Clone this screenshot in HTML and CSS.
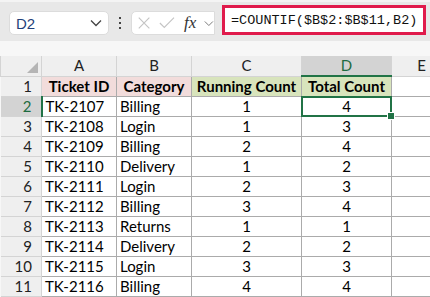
FILE: index.html
```html
<!DOCTYPE html>
<html lang="en">
<head>
    <meta charset="UTF-8">
    <title>COUNTIF Running Count</title>
    <link rel="stylesheet" href="styles.css">
</head>
<body>
    <div class="toolbar">
        <div class="name-box">
            <span>D2</span>
            <svg class="chev" width="12" height="8" viewBox="0 0 12 8"><path d="M1 1.5 L6 6.5 L11 1.5" fill="none" stroke="#444" stroke-width="1.3"/></svg>
        </div>
        <div class="dots"><i></i><i></i><i></i></div>
        <div class="fx-box">
            <svg width="16" height="16" viewBox="0 0 16 16"><path d="M2 2 L14 14 M14 2 L2 14" stroke="#c4c4c4" stroke-width="1.3"/></svg>
            <svg width="18" height="16" viewBox="0 0 18 16"><path d="M1 8 L6 13 L17 2" fill="none" stroke="#c4c4c4" stroke-width="1.3"/></svg>
            <span class="fx">fx</span>
            <svg class="chev" width="11" height="7" viewBox="0 0 12 8"><path d="M1 1.5 L6 6.5 L11 1.5" fill="none" stroke="#777" stroke-width="1.2"/></svg>
        </div>
        <div class="formula">=COUNTIF($B$2:$B$11,B2)</div>
    </div>

    <div class="spacer"></div>

    <div class="grid">
        <table class="sheet">
            <colgroup>
                <col style="width:41px"><col style="width:75px"><col style="width:75px">
                <col style="width:110px"><col style="width:90px"><col style="width:60px">
            </colgroup>
            <thead>
                <tr class="col-heads">
                    <th class="corner"><span class="tri"></span></th>
                    <th>A</th><th>B</th><th>C</th><th class="active">D</th><th>E</th>
                </tr>
            </thead>
            <tbody id="rows">
                <tr>
                    <th class="rh">1</th>
                    <td class="head pink">Ticket ID</td>
                    <td class="head pink">Category</td>
                    <td class="head green">Running Count</td>
                    <td class="head green">Total Count</td>
                    <td class="blank"></td>
                </tr>
            </tbody>
        </table>
    </div>

    <script>
        var data = [
            ['TK-2107', 'Billing', 1, 4],
            ['TK-2108', 'Login', 1, 3],
            ['TK-2109', 'Billing', 2, 4],
            ['TK-2110', 'Delivery', 1, 2],
            ['TK-2111', 'Login', 2, 3],
            ['TK-2112', 'Billing', 3, 4],
            ['TK-2113', 'Returns', 1, 1],
            ['TK-2114', 'Delivery', 2, 2],
            ['TK-2115', 'Login', 3, 3],
            ['TK-2116', 'Billing', 4, 4]
        ];
        var body = document.getElementById('rows');
        data.forEach(function (r, i) {
            var tr = document.createElement('tr');
            var sel = i === 0;
            tr.innerHTML =
                '<th class="rh' + (sel ? ' active' : '') + '">' + (i + 2) + '</th>' +
                '<td>' + r[0] + '</td>' +
                '<td>' + r[1] + '</td>' +
                '<td class="num">' + r[2] + '</td>' +
                '<td class="num' + (sel ? ' selected' : '') + '">' + r[3] +
                (sel ? '<span class="sel-box"></span><span class="handle"></span>' : '') + '</td>' +
                '<td class="blank"></td>';
            body.appendChild(tr);
        });
    </script>
</body>
</html>
```

FILE: styles.css
```css
body {
    margin: 0;
    background: #f7f7f7;
    font-family: 'Lato', 'Open Sans', sans-serif;
    color: #000;
    width: 430px;
    height: 297px;
    overflow: hidden;
}

.toolbar {
    height: 41px;
    background: #e8e8e8;
    border-top: 2px solid #f4f4f4;
    box-sizing: border-box;
    display: flex;
    align-items: center;
    padding-left: 9px;
}

.name-box {
    width: 100px;
    height: 24px;
    box-sizing: border-box;
    background: #fff;
    border: 1px solid #dcdcdc;
    border-radius: 5px;
    display: flex;
    align-items: center;
    justify-content: space-between;
    padding: 0 6px 0 6px;
    font-family: 'Liberation Sans', sans-serif;
    font-size: 15px;
    color: #1f3f7a;
    margin-top: 3px;
}

.dots {
    width: 22px;
    display: flex;
    flex-direction: column;
    align-items: center;
    gap: 3px;
    margin-top: 3px;
}

.dots i {
    width: 2px;
    height: 2px;
    background: #444;
}

.fx-box {
    width: 84px;
    height: 24px;
    box-sizing: border-box;
    background: #fff;
    border: 1px solid #dcdcdc;
    border-radius: 5px 0 0 5px;
    display: flex;
    align-items: center;
    gap: 8px;
    padding-left: 5px;
    margin-top: 3px;
}

.fx {
    font-family: 'Liberation Serif', serif;
    font-style: italic;
    font-size: 17px;
    color: #333;
    margin-left: 1px;
}

.formula {
    margin-left: 7px;
    width: 204px;
    height: 30px;
    box-sizing: border-box;
    border: 3px solid #e01b4c;
    background: #fff;
    font-family: 'Liberation Mono', monospace;
    font-size: 13.5px;
    color: #111;
    display: flex;
    align-items: center;
    padding-left: 6px;
    margin-top: -3px;
}

.spacer {
    height: 15px;
}

.grid {
    width: 430px;
    overflow: hidden;
}

.sheet {
    border-collapse: collapse;
    table-layout: fixed;
    width: 451px;
    font-size: 15px;
}

.sheet th,
.sheet td {
    height: 19px;
    padding: 0;
    border: 1px solid #ababab;
    white-space: nowrap;
    overflow: visible;
    line-height: 19px;
}

.col-heads th {
    background: #efefef;
    font-weight: normal;
    color: #222;
    text-align: center;
    height: 18px;
    border-color: #d4d4d4;
    border-top: none;
}

.col-heads th.active {
    background: #d3d3d3;
    color: #1e6b40;
    border-bottom: 2px solid #217346;
}

.corner {
    position: relative;
}

.tri {
    position: absolute;
    right: 3px;
    bottom: 3px;
    width: 0;
    height: 0;
    border-left: 11px solid transparent;
    border-bottom: 11px solid #b5b5b5;
}

.rh {
    background: #efefef;
    font-weight: normal;
    text-align: right;
    padding-right: 9px !important;
    color: #222;
    border-color: #d4d4d4 !important;
    border-left: none !important;
}

.rh.active {
    background: #d3d3d3;
    color: #1e6b40;
    border-right: 2px solid #217346 !important;
}

.sheet td {
    background: #fff;
    padding-left: 3px;
}

.sheet td.head {
    font-weight: bold;
    text-align: center;
    padding-left: 0;
}

.pink {
    background: #f2dcdb !important;
}

.green {
    background: #d8e4bc !important;
}

.num {
    text-align: center;
    padding-left: 0 !important;
}

.blank {
    border-right: none !important;
}

.selected {
    position: relative;
}

.sel-box {
    position: absolute;
    left: -1px;
    top: -1px;
    right: -1px;
    bottom: -1px;
    border: 2px solid #217346;
}

.handle {
    position: absolute;
    right: -4px;
    bottom: -4px;
    width: 6px;
    height: 6px;
    background: #217346;
    border: 1px solid #fff;
}
```
